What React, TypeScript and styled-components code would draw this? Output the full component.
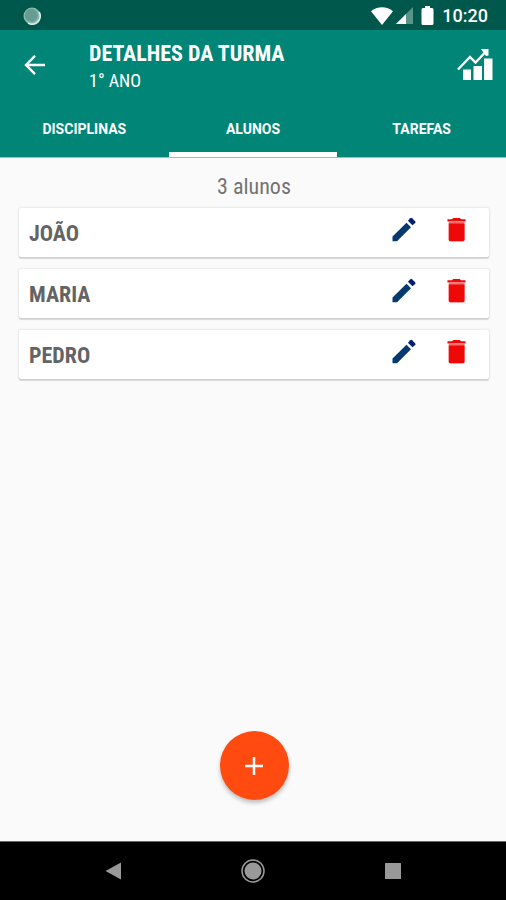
import React, { useState } from 'react';
import styled, { createGlobalStyle } from 'styled-components';

const GlobalStyle = createGlobalStyle`
  * { box-sizing: border-box; }
  body { margin: 0; background: #fafafa; }
  button { border: 0; padding: 0; background: none; color: inherit; font: inherit; cursor: pointer; }
  svg { display: block; }
`;

const condensed = `'Roboto Condensed', Roboto, 'Liberation Sans', sans-serif`;

const Screen = styled.div`
  display: flex;
  flex-direction: column;
  min-height: 100vh;
  background: #fafafa;
  font-family: Roboto, 'Liberation Sans', sans-serif;
`;

const StatusBar = styled.div`
  display: flex;
  align-items: center;
  justify-content: space-between;
  height: 30px;
  padding: 1px 18px 0 23px;
  background: #00574b;
  color: #fff;
`;

const StatusIcons = styled.div`
  display: flex;
  align-items: center;
  gap: 7px;
`;

const Signals = styled.div`
  display: flex;
  align-items: center;
  gap: 3px;
`;

const Clock = styled.time`
  font-size: 18px;
  font-weight: 500;
  line-height: 20px;
`;

const Header = styled.header`
  background: #008577;
  color: #fff;
  border-bottom: 1px solid #b5b5b5;
`;

const Toolbar = styled.div`
  display: flex;
  align-items: center;
  height: 70px;
  padding: 0 12px 0 23px;
`;

const IconButton = styled.button`
  display: flex;
  flex: none;
`;

const Titles = styled.div`
  flex: 1;
  padding: 3px 0 0 42px;
`;

const Title = styled.h1`
  margin: 0;
  font-family: ${condensed};
  font-size: 22px;
  font-weight: 700;
  line-height: 28px;
`;

const Subtitle = styled.p`
  margin: 0;
  font-family: ${condensed};
  font-size: 18px;
  line-height: 26px;
`;

const Tabs = styled.div`
  display: grid;
  grid-template-columns: repeat(3, 1fr);
  height: 57px;
`;

const Tab = styled.button<{ $active: boolean }>`
  border-bottom: 5px solid ${(p) => (p.$active ? '#fff' : 'transparent')};
  border-radius: 2px 2px 0 0;
  padding-top: 6px;
  font-size: 14px;
  font-weight: 700;
  line-height: 20px;
`;

const Content = styled.main`
  display: flex;
  flex: 1;
  flex-direction: column;
  padding: 15px 17px 41px 19px;
`;

const Count = styled.p`
  margin: 0 0 7px;
  color: #737373;
  font-family: ${condensed};
  font-size: 22px;
  line-height: 28px;
  text-align: center;
`;

const List = styled.ul`
  display: flex;
  flex-direction: column;
  gap: 12px;
  margin: 0;
  padding: 0;
  list-style: none;
`;

const Card = styled.li`
  display: flex;
  align-items: center;
  height: 49px;
  padding: 0 17px 0 10px;
  border-radius: 2px;
  background: #fff;
  box-shadow: 0 0 2px 1px rgba(0, 0, 0, 0.07), 0 2px 1px rgba(0, 0, 0, 0.12);
`;

const Name = styled.span`
  flex: 1;
  padding-top: 2px;
  color: #646464;
  font-family: ${condensed};
  font-size: 22px;
  font-weight: 700;
  line-height: 28px;
`;

const Actions = styled.div`
  display: flex;
  gap: 22px;
  padding-bottom: 6px;
`;

const AddButton = styled.button`
  display: flex;
  align-items: center;
  align-self: center;
  justify-content: center;
  width: 69px;
  height: 69px;
  margin-top: auto;
  border-radius: 50%;
  background: #ff4a10;
  box-shadow: 0 3px 4px rgba(0, 0, 0, 0.24);
`;

const SystemNav = styled.nav`
  display: flex;
  align-items: center;
  justify-content: space-between;
  height: 59px;
  padding: 0 100px;
  border-top: 1px solid #666;
  background: #000;
`;

const PencilIcon = () => (
  <svg width="31" height="31" viewBox="0 0 24 24" fill="#05396f" aria-hidden="true">
    <path d="M3.500 17.500V21h3.500L17.800 10.200l-3.500-3.500z" />
    <path d="M21 7.040c.39-.39.39-1.020 0-1.410l-2.340-2.340a1 1 0 0 0-1.410 0l-1.800 2 3.500 3.500z" fill="#041f70" />
  </svg>
);

const TrashIcon = () => (
  <svg width="31" height="31" viewBox="0 0 24 24" fill="#ee0808" aria-hidden="true">
    <path d="M6 6.200h12.200V20Q18.200 21 17.200 21H7Q6 21 6 20z" fill="#f76f6f" />
    <path d="M6 7.300h12.200V20Q18.200 21 17.200 21H7Q6 21 6 20z" />
    <path d="M19 4h-3.500l-1-1h-5l-1 1H5v1.800h14V4z" />
  </svg>
);

const tabs = ['DISCIPLINAS', 'ALUNOS', 'TAREFAS'];
const students = ['JOÃO', 'MARIA', 'PEDRO'];

export default function App() {
  const [active, setActive] = useState('ALUNOS');
  return (
    <>
      <GlobalStyle />
      <Screen>
        <StatusBar>
          <svg width="18" height="18" viewBox="0 0 18 18" aria-hidden="true">
            <circle cx="9" cy="9" r="8.5" fill="#8bb8ae" />
            <path d="M16 5A8 8 0 0 1 5 16" fill="none" stroke="#dcece8" strokeWidth="1.8" />
            <circle cx="8.3" cy="8.3" r="6.5" fill="#659d92" />
          </svg>
          <StatusIcons>
            <Signals>
              <svg width="22" height="18" viewBox="0 0 22 18" aria-hidden="true">
                <path d="M0 4.2C6-1.2 16-1.2 22 4.2L11 18z" fill="#fff" />
              </svg>
              <svg width="17" height="17" viewBox="0 0 17 17" aria-hidden="true">
                <path d="M17 0v17H0z" fill="#5b9389" />
                <path d="M10 7v10H0z" fill="#fff" />
              </svg>
            </Signals>
            <svg width="15" height="20" viewBox="0 0 15 20" aria-hidden="true">
              <path d="M5 0h5v2h2q1.500 0 1.500 1.500v14q0 1.500-1.500 1.500H3q-1.500 0-1.500-1.500v-14Q1.500 2 3 2h2z" fill="#fff" />
            </svg>
            <Clock>10:20</Clock>
          </StatusIcons>
        </StatusBar>
        <Header>
          <Toolbar>
            <IconButton aria-label="Voltar">
              <svg width="24" height="24" viewBox="0 0 24 24" fill="none" stroke="#fff" strokeWidth="2.4" aria-hidden="true">
                <path d="M22 12H4M12 2.8L3 12l9 9.2" />
              </svg>
            </IconButton>
            <Titles>
              <Title>DETALHES DA TURMA</Title>
              <Subtitle>1° ANO</Subtitle>
            </Titles>
            <IconButton aria-label="Estatísticas">
              <svg width="37" height="32" viewBox="0 0 37 32" aria-hidden="true">
                <path d="M6 20.500h8V31H6zM16.500 17H25v14h-8.500zM27 9.500h8.500V31H27z" fill="#fff" />
                <path d="M1 20.500L13 8l5.500 5.500L27.500 4" fill="none" stroke="#fff" strokeWidth="2.400" />
                <path d="M24 0h7.500v6.500L29 7z" fill="#fff" />
              </svg>
            </IconButton>
          </Toolbar>
          <Tabs role="tablist">
            {tabs.map((tab) => (
              <Tab key={tab} role="tab" aria-selected={tab === active} $active={tab === active} onClick={() => setActive(tab)}>
                {tab}
              </Tab>
            ))}
          </Tabs>
        </Header>
        <Content>
          <Count>3 alunos</Count>
          <List>
            {students.map((student) => (
              <Card key={student}>
                <Name>{student}</Name>
                <Actions>
                  <IconButton aria-label={`Editar ${student}`}><PencilIcon /></IconButton>
                  <IconButton aria-label={`Excluir ${student}`}><TrashIcon /></IconButton>
                </Actions>
              </Card>
            ))}
          </List>
          <AddButton aria-label="Adicionar aluno">
            <svg width="18" height="18" viewBox="0 0 18 18" stroke="#fff" strokeWidth="2.500" aria-hidden="true">
              <path d="M9 0v18M0 9h18" />
            </svg>
          </AddButton>
        </Content>
        <SystemNav>
          <IconButton aria-label="Voltar no sistema">
            <svg width="26" height="26" viewBox="0 0 26 26" aria-hidden="true"><path d="M21 4.500v17L5.500 13z" fill="#999" /></svg>
          </IconButton>
          <IconButton aria-label="Início">
            <svg width="26" height="26" viewBox="0 0 26 26" aria-hidden="true">
              <circle cx="13" cy="13" r="11" fill="none" stroke="#999" strokeWidth="1.500" />
              <circle cx="13" cy="13" r="8.500" fill="#999" />
            </svg>
          </IconButton>
          <IconButton aria-label="Recentes">
            <svg width="26" height="26" viewBox="0 0 26 26" aria-hidden="true"><rect x="5" y="5" width="16" height="16" rx="0.500" fill="#999" /></svg>
          </IconButton>
        </SystemNav>
      </Screen>
    </>
  );
}
